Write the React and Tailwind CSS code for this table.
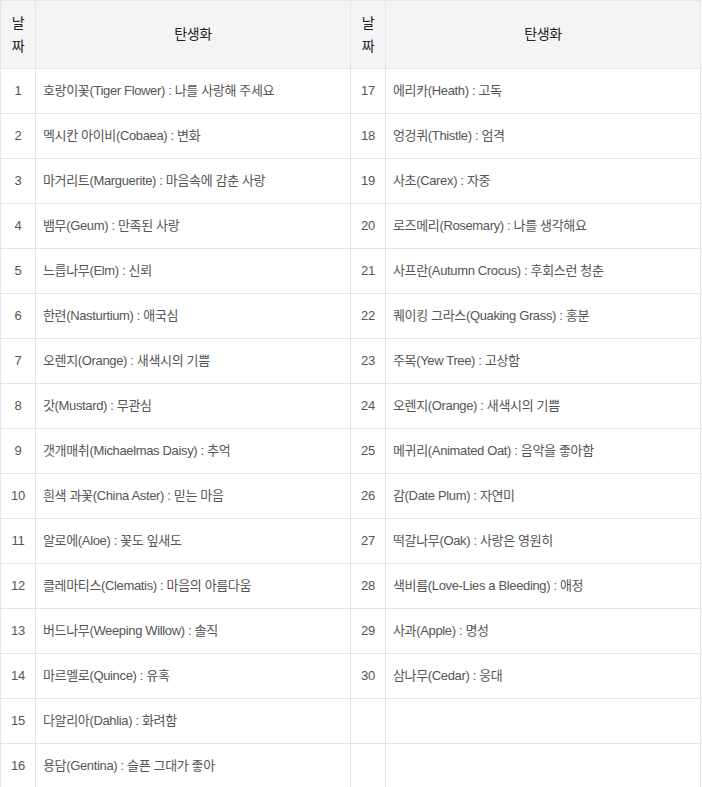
import React from 'react'

const left = [
  '호랑이꽃(Tiger Flower) : 나를 사랑해 주세요',
  '멕시칸 아이비(Cobaea) : 변화',
  '마거리트(Marguerite) : 마음속에 감춘 사랑',
  '뱀무(Geum) : 만족된 사랑',
  '느릅나무(Elm) : 신뢰',
  '한련(Nasturtium) : 애국심',
  '오렌지(Orange) : 새색시의 기쁨',
  '갓(Mustard) : 무관심',
  '갯개매취(Michaelmas Daisy) : 추억',
  '흰색 과꽃(China Aster) : 믿는 마음',
  '알로에(Aloe) : 꽃도 잎새도',
  '클레마티스(Clematis) : 마음의 아름다움',
  '버드나무(Weeping Willow) : 솔직',
  '마르멜로(Quince) : 유혹',
  '다알리아(Dahlia) : 화려함',
  '용담(Gentina) : 슬픈 그대가 좋아',
]

const right = [
  '에리카(Heath) : 고독',
  '엉겅퀴(Thistle) : 엄격',
  '사초(Carex) : 자중',
  '로즈메리(Rosemary) : 나를 생각해요',
  '사프란(Autumn Crocus) : 후회스런 청춘',
  '퀘이킹 그라스(Quaking Grass) : 홍분',
  '주목(Yew Tree) : 고상함',
  '오렌지(Orange) : 새색시의 기쁨',
  '메귀리(Animated Oat) : 음악을 좋아함',
  '감(Date Plum) : 자연미',
  '떡갈나무(Oak) : 사랑은 영원히',
  '색비름(Love-Lies a Bleeding) : 애정',
  '사과(Apple) : 명성',
  '삼나무(Cedar) : 웅대',
]

const font = { fontFamily: '"Liberation Sans", "Noto Sans CJK KR", sans-serif' }

export default function App() {
  return (
    <div className="bg-white" style={font}>
      <table className="w-[701px] table-fixed border-collapse text-[13px] tracking-[-0.35px] text-[#555]">
        <colgroup>
          <col className="w-[35px]" />
          <col className="w-[315px]" />
          <col className="w-[35px]" />
          <col className="w-[315px]" />
        </colgroup>
        <thead>
          <tr className="h-[68px] bg-[#f4f4f4] text-[14px] font-normal text-[#222]">
            <th className="border border-[#e5e5e5] px-[8px] font-normal leading-[23px]">날짜</th>
            <th className="border border-[#e5e5e5] font-normal">탄생화</th>
            <th className="border border-[#e5e5e5] px-[8px] font-normal leading-[23px]">날짜</th>
            <th className="border border-[#e5e5e5] font-normal">탄생화</th>
          </tr>
        </thead>
        <tbody>
          {left.map((name, i) => (
            <tr key={i} className="h-[45px]">
              <td className="border border-[#e5e5e5] text-center">{i + 1}</td>
              <td className="border border-[#e5e5e5] pl-[7px]">{name}</td>
              <td className="border border-[#e5e5e5] text-center">{right[i] ? i + 17 : ''}</td>
              <td className="border border-[#e5e5e5] pl-[7px]">{right[i] || ''}</td>
            </tr>
          ))}
        </tbody>
      </table>
    </div>
  )
}
